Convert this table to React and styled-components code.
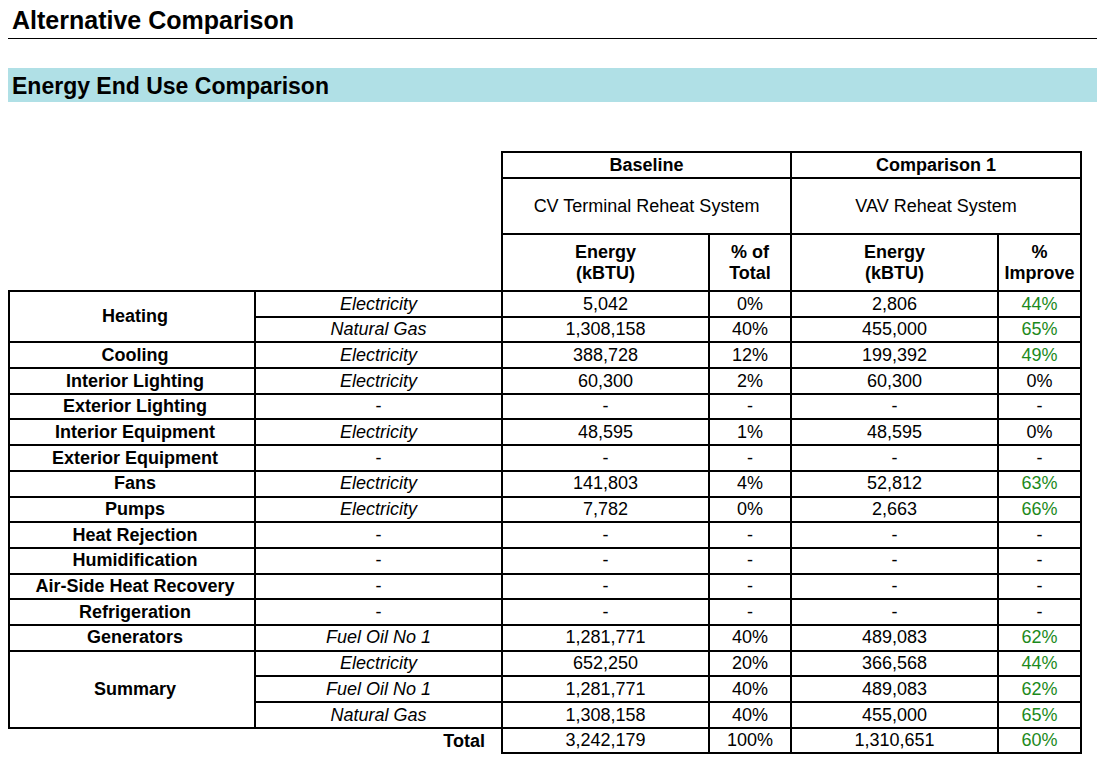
import styled, { createGlobalStyle } from "styled-components";

const GlobalStyle = createGlobalStyle`
  body {
    margin: 0;
    background: #ffffff;
    color: #000000;
    font-family: "Liberation Sans", Arial, sans-serif;
  }
`;

const Page = styled.div`
  width: 1089px;
  padding-left: 8px;
`;

const Title = styled.h1`
  margin: 0;
  padding: 6px 0 3px 4px;
  font-size: 25px;
  font-weight: 700;
  border-bottom: 1px solid #000;
`;

const Banner = styled.h2`
  margin: 29px 0 0;
  padding: 5px 0 3px 4px;
  background: #b0e0e6;
  font-size: 23px;
  font-weight: 700;
  line-height: 26px;
`;

const Table = styled.table`
  margin-top: 49px;
  border-collapse: collapse;
  table-layout: fixed;
  width: 1072px;
  font-size: 18px;
`;

// heights are the content box; the 2px collapsed border is added on top
const Cell = styled.td`
  height: ${(p) => p.$h || 23.7}px;
  padding: 0 2px;
  border: ${(p) => (p.$blank ? "none" : "2px solid #000")};
  text-align: ${(p) => p.$align || "center"};
  vertical-align: middle;
  font-weight: ${(p) => (p.$bold ? 700 : 400)};
  font-style: ${(p) => (p.$italic ? "italic" : "normal")};
  color: ${(p) => (p.$green ? "#1c8a1c" : "#000")};
  line-height: 1.15;
  white-space: nowrap;
`;

const EndUseLabel = styled(Cell)`
  padding-left: 8px;
`;

const TotalLabel = styled(Cell)`
  padding-right: 16px;
`;

const dash = ["-", "-", "-", "-", "-"];

const groups = [
  {
    label: "Heating",
    fuels: [
      ["Electricity", "5,042", "0%", "2,806", "44%"],
      ["Natural Gas", "1,308,158", "40%", "455,000", "65%"],
    ],
  },
  { label: "Cooling", fuels: [["Electricity", "388,728", "12%", "199,392", "49%"]] },
  { label: "Interior Lighting", fuels: [["Electricity", "60,300", "2%", "60,300", "0%"]] },
  { label: "Exterior Lighting", fuels: [dash] },
  { label: "Interior Equipment", fuels: [["Electricity", "48,595", "1%", "48,595", "0%"]] },
  { label: "Exterior Equipment", fuels: [dash] },
  { label: "Fans", fuels: [["Electricity", "141,803", "4%", "52,812", "63%"]] },
  { label: "Pumps", fuels: [["Electricity", "7,782", "0%", "2,663", "66%"]] },
  { label: "Heat Rejection", fuels: [dash] },
  { label: "Humidification", fuels: [dash] },
  { label: "Air-Side Heat Recovery", fuels: [dash] },
  { label: "Refrigeration", fuels: [dash] },
  { label: "Generators", fuels: [["Fuel Oil No 1", "1,281,771", "40%", "489,083", "62%"]] },
  {
    label: "Summary",
    fuels: [
      ["Electricity", "652,250", "20%", "366,568", "44%"],
      ["Fuel Oil No 1", "1,281,771", "40%", "489,083", "62%"],
      ["Natural Gas", "1,308,158", "40%", "455,000", "65%"],
    ],
  },
];

const isGain = (v) => v !== "-" && parseInt(v, 10) > 0;

function FuelCells({ fuel }) {
  const [name, energy, share, compEnergy, improve] = fuel;
  return (
    <>
      <Cell $italic={name !== "-"}>{name}</Cell>
      <Cell>{energy}</Cell>
      <Cell>{share}</Cell>
      <Cell>{compEnergy}</Cell>
      <Cell $green={isGain(improve)}>{improve}</Cell>
    </>
  );
}

function EndUseTable() {
  return (
    <Table>
      <colgroup>
        <col style={{ width: 246 }} />
        <col style={{ width: 247 }} />
        <col style={{ width: 207 }} />
        <col style={{ width: 82 }} />
        <col style={{ width: 207 }} />
        <col style={{ width: 83 }} />
      </colgroup>
      <thead>
        <tr>
          <Cell $blank colSpan={2} rowSpan={3} />
          <Cell $bold colSpan={2} $h={24}>Baseline</Cell>
          <Cell $bold colSpan={2} $h={24}>Comparison 1</Cell>
        </tr>
        <tr>
          <Cell colSpan={2} $h={54}>CV Terminal Reheat System</Cell>
          <Cell colSpan={2} $h={54}>VAV Reheat System</Cell>
        </tr>
        <tr>
          <Cell $bold $h={55}>Energy<br />(kBTU)</Cell>
          <Cell $bold $h={55}>% of<br />Total</Cell>
          <Cell $bold $h={55}>Energy<br />(kBTU)</Cell>
          <Cell $bold $h={55}>%<br />Improve</Cell>
        </tr>
      </thead>
      <tbody>
        {groups.map((g) =>
          g.fuels.map((fuel, i) => (
            <tr key={g.label + i}>
              {i === 0 && (
                <EndUseLabel $bold rowSpan={g.fuels.length}>
                  {g.label}
                </EndUseLabel>
              )}
              <FuelCells fuel={fuel} />
            </tr>
          ))
        )}
        <tr>
          <TotalLabel $blank $bold $align="right" colSpan={2}>
            Total
          </TotalLabel>
          <Cell>3,242,179</Cell>
          <Cell>100%</Cell>
          <Cell>1,310,651</Cell>
          <Cell $green>60%</Cell>
        </tr>
      </tbody>
    </Table>
  );
}

export default function App() {
  return (
    <Page>
      <GlobalStyle />
      <Title>Alternative Comparison</Title>
      <Banner>Energy End Use Comparison</Banner>
      <EndUseTable />
    </Page>
  );
}
